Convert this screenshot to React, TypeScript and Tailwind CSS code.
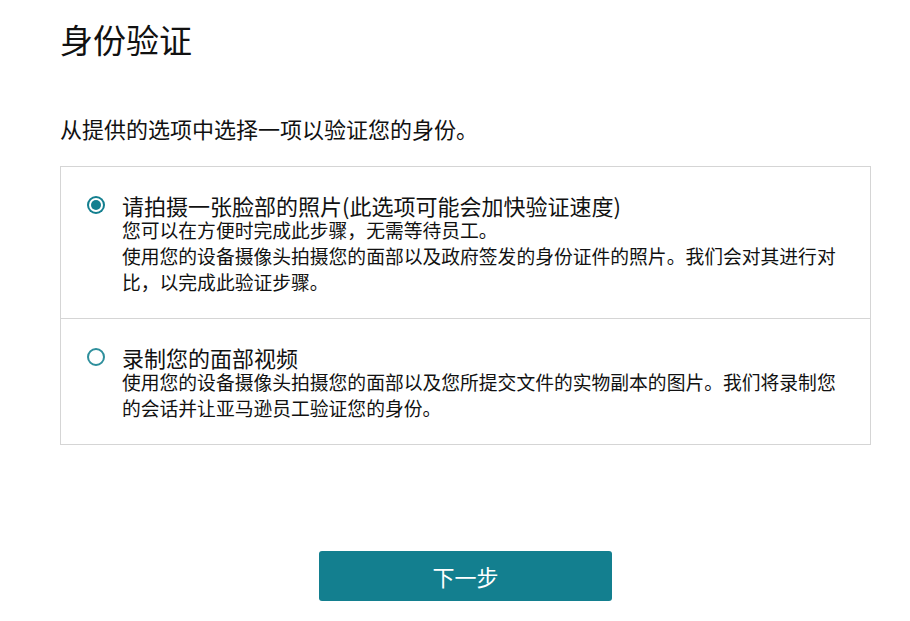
import { useState } from "react";

const options = [
  {
    id: "photo",
    title: "请拍摄一张脸部的照片(此选项可能会加快验证速度)",
    lines: [
      "您可以在方便时完成此步骤，无需等待员工。",
      "使用您的设备摄像头拍摄您的面部以及政府签发的身份证件的照片。我们会对其进行对比，以完成此验证步骤。",
    ],
  },
  {
    id: "video",
    title: "录制您的面部视频",
    lines: [
      "使用您的设备摄像头拍摄您的面部以及您所提交文件的实物副本的图片。我们将录制您的会话并让亚马逊员工验证您的身份。",
    ],
  },
];

const Radio = ({ checked }: { checked: boolean }) =>
  checked ? (
    <span className="flex h-[18px] w-[18px] shrink-0 items-center justify-center rounded-full bg-[#137f8f]">
      <span className="flex h-[14px] w-[14px] items-center justify-center rounded-full bg-white">
        <span className="h-[10px] w-[10px] rounded-full bg-[#137f8f]" />
      </span>
    </span>
  ) : (
    <span className="block h-[18px] w-[18px] shrink-0 rounded-full border-2 border-[#2e8f9c] bg-white" />
  );

export default function App() {
  const [selected, setSelected] = useState("photo");

  return (
    <div className="min-h-[621px] bg-white px-[60px] pt-[19px] font-['Noto_Sans_CJK_SC','Noto_Sans',sans-serif] text-[#111]">
      <h1 className="text-[33px] font-normal leading-[40px]">身份验证</h1>

      <p className="mt-[55px] text-[22px] leading-[28px]">从提供的选项中选择一项以验证您的身份。</p>

      <div className="mt-[24px] w-[811px] border border-[#d5d5d5]">
        {options.map((opt, i) => (
          <label
            key={opt.id}
            onClick={() => setSelected(opt.id)}
            className={`flex cursor-pointer gap-[17px] pl-[26px] pt-[27px] pb-[23px] ${
              i > 0 ? "border-t border-[#d5d5d5]" : ""
            }`}
          >
            <div className="pt-[2px]">
              <Radio checked={selected === opt.id} />
            </div>
            <div className="w-[726px]">
              <div className="text-[22px] leading-[23px]">{opt.title}</div>
              <div className="text-[18.8px] leading-[26px]">
                {opt.lines.map((l) => (
                  <p key={l}>{l}</p>
                ))}
              </div>
            </div>
          </label>
        ))}
      </div>

      <div className="mt-[106px] flex w-[811px] justify-center">
        <button className="h-[50px] w-[293px] rounded-[3px] bg-[#137f8f] text-[22px] text-white">
          下一步
        </button>
      </div>
    </div>
  );
}
